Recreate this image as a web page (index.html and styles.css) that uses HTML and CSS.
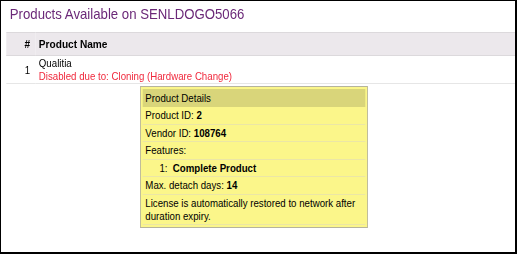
FILE: index.html
```html
<!DOCTYPE html>
<html lang="en">
  <head>
    <meta charset="UTF-8" />
    <title>Products Available</title>
    <link rel="stylesheet" href="styles.css">
  </head>
  <body>
    <div class="frame">
      <div class="page">
        <h1>Products Available on SENLDOGO5066</h1>

        <!-- Tabla de productos -->
        <table class="products">
          <thead>
            <tr>
              <th class="num">#</th>
              <th>Product Name</th>
            </tr>
          </thead>
          <tbody>
            <tr>
              <td class="num">1</td>
              <td>
                Qualitia<br />
                <span class="disabled">Disabled due to: Cloning (Hardware Change)</span>
              </td>
            </tr>
          </tbody>
        </table>

        <!-- Tooltip de detalles -->
        <div class="tooltip">
          <div class="tip-head">Product Details</div>
          <div class="tip-row">Product ID: <b>2</b></div>
          <div class="tip-row">Vendor ID: <b>108764</b></div>
          <div class="tip-row">Features:</div>
          <div class="tip-row feature">1:&nbsp; <b>Complete Product</b></div>
          <div class="tip-row">Max. detach days: <b>14</b></div>
          <div class="tip-row">License is automatically restored to network after duration expiry.</div>
        </div>
      </div>
    </div>
  </body>
</html>
```

FILE: styles.css
```css
body {
  margin: 0;
  padding: 0;
  background: #fff;
  font-family: "Liberation Sans", Arial, sans-serif;
  color: #000;
}

.frame {
  box-sizing: border-box;
  width: 517px;
  height: 254px;
  border-style: solid;
  border-color: #000;
  border-width: 1px 2px 2px 1px;
  overflow: hidden;
}

/* la captura original esta comprimida en horizontal */
.page {
  position: relative;
  width: 584px;
  padding-left: 6px;
  box-sizing: border-box;
  transform: scaleX(0.88);
  transform-origin: 0 0;
}

h1 {
  margin: 0 0 9px;
  padding: 3px 0 0 4px;
  font-size: 15px;
  line-height: 19px;
  font-weight: normal;
  color: #6b2878;
}

table {
  width: 100%;
  border-collapse: collapse;
  font-size: 11px;
}

table th,
table td {
  text-align: left;
  padding: 0 4px;
}

table th {
  background-color: #ece8ec;
  border-top: 1px solid #dcd9dc;
  border-bottom: 1px solid #dcd9dc;
  height: 22px;
  font-size: 11.5px;
}

table td {
  height: 26px;
  padding-top: 1px;
  border-bottom: 1px solid #e6e6e6;
  line-height: 13px;
}

.num {
  width: 23px;
  text-align: right;
  padding-right: 6px;
}

.disabled {
  color: #f0283c;
}

.tooltip {
  position: absolute;
  left: 158px;
  top: 85px;
  width: 253px;
  padding: 2px;
  background: #fbf68a;
  border: 1px solid #b6b49c;
  font-size: 11px;
  line-height: 13px;
}

.tip-head {
  background: #d9d57a;
  padding: 3px 3px 2px;
}

.tip-row {
  padding: 2px 3px 1.5px;
  border-bottom: 1px solid #ebe6a6;
}

.feature {
  padding-left: 19px;
}
```
